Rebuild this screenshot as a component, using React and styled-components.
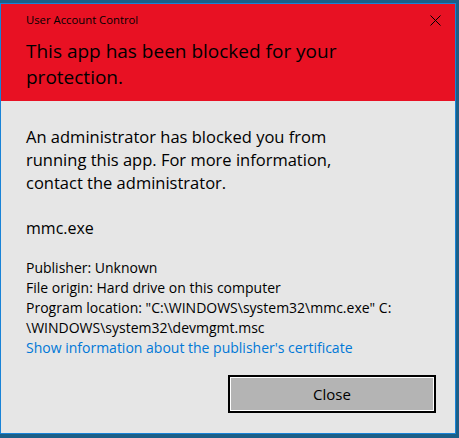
import React from 'react'
import styled, { createGlobalStyle } from 'styled-components'

const GlobalStyle = createGlobalStyle`
  html, body {
    margin: 0;
    padding: 0;
    background: #1b5f88;
  }
  body {
    font-family: "Open Sans", "Noto Sans", sans-serif;
  }
`

const Window = styled.div`
  margin-top: 3px;
  width: 456px;
  height: 431px;
  box-sizing: border-box;
  border: 1px solid #1883d7;
  background: #e6e6e6;
  display: flex;
  flex-direction: column;
`

const Header = styled.header`
  background: #e81123;
  height: 97px;
  box-sizing: border-box;
  padding: 8px 0 0 25px;
  position: relative;
`

const Caption = styled.div`
  font-size: 11.3px;
  color: #000;
  line-height: 16px;
`

const Heading = styled.h1`
  margin: 10px 0 0;
  font-size: 19px;
  font-weight: 400;
  line-height: 26px;
  color: #000;
  width: 340px;
`

const CloseX = styled.button`
  position: absolute;
  top: 9px;
  right: 13px;
  width: 14px;
  height: 14px;
  padding: 0;
  border: none;
  background: none;
  display: flex;
  align-items: center;
  justify-content: center;
`

const Body = styled.main`
  flex: 1;
  padding: 24px 19px 0 25px;
  display: flex;
  flex-direction: column;
`

const Message = styled.p`
  margin: 0;
  font-size: 16.5px;
  line-height: 23px;
  color: #000;
  max-width: 340px;
`

const FileName = styled.p`
  margin: 23px 0 0;
  font-size: 16px;
  line-height: 23px;
  color: #000;
`

const Details = styled.div`
  margin-top: 18px;
  font-size: 14px;
  line-height: 20px;
  color: #000;
`

const Line = styled.div`
  white-space: nowrap;
`

const Link = styled.a`
  color: #0078d7;
  text-decoration: none;
  cursor: pointer;
`

const Footer = styled.div`
  display: flex;
  justify-content: flex-end;
  padding-top: 17px;
`

const Button = styled.button`
  width: 208px;
  height: 38px;
  box-sizing: border-box;
  border: 2px solid #000;
  box-shadow: inset 0 0 0 1px #fff;
  background: #b4b4b4;
  font-family: inherit;
  font-size: 15px;
  color: #000;
`

export default function App() {
  return (
    <>
      <GlobalStyle />
      <Window>
        <Header>
          <Caption>User Account Control</Caption>
          <Heading>This app has been blocked for your protection.</Heading>
          <CloseX aria-label="Close">
            <svg width="11" height="11" viewBox="0 0 11 11">
              <path d="M0.5 0.5L10.5 10.5M10.5 0.5L0.5 10.5" stroke="#000" strokeWidth="1" />
            </svg>
          </CloseX>
        </Header>
        <Body>
          <Message>
            An administrator has blocked you from running this app. For more information,
            contact the administrator.
          </Message>
          <FileName>mmc.exe</FileName>
          <Details>
            <Line>Publisher: Unknown</Line>
            <Line>File origin: Hard drive on this computer</Line>
            <Line>Program location: "C:\WINDOWS\system32\mmc.exe" C:</Line>
            <Line>\WINDOWS\system32\devmgmt.msc</Line>
            <Line>
              <Link>Show information about the publisher's certificate</Link>
            </Line>
          </Details>
          <Footer>
            <Button>Close</Button>
          </Footer>
        </Body>
      </Window>
    </>
  )
}
